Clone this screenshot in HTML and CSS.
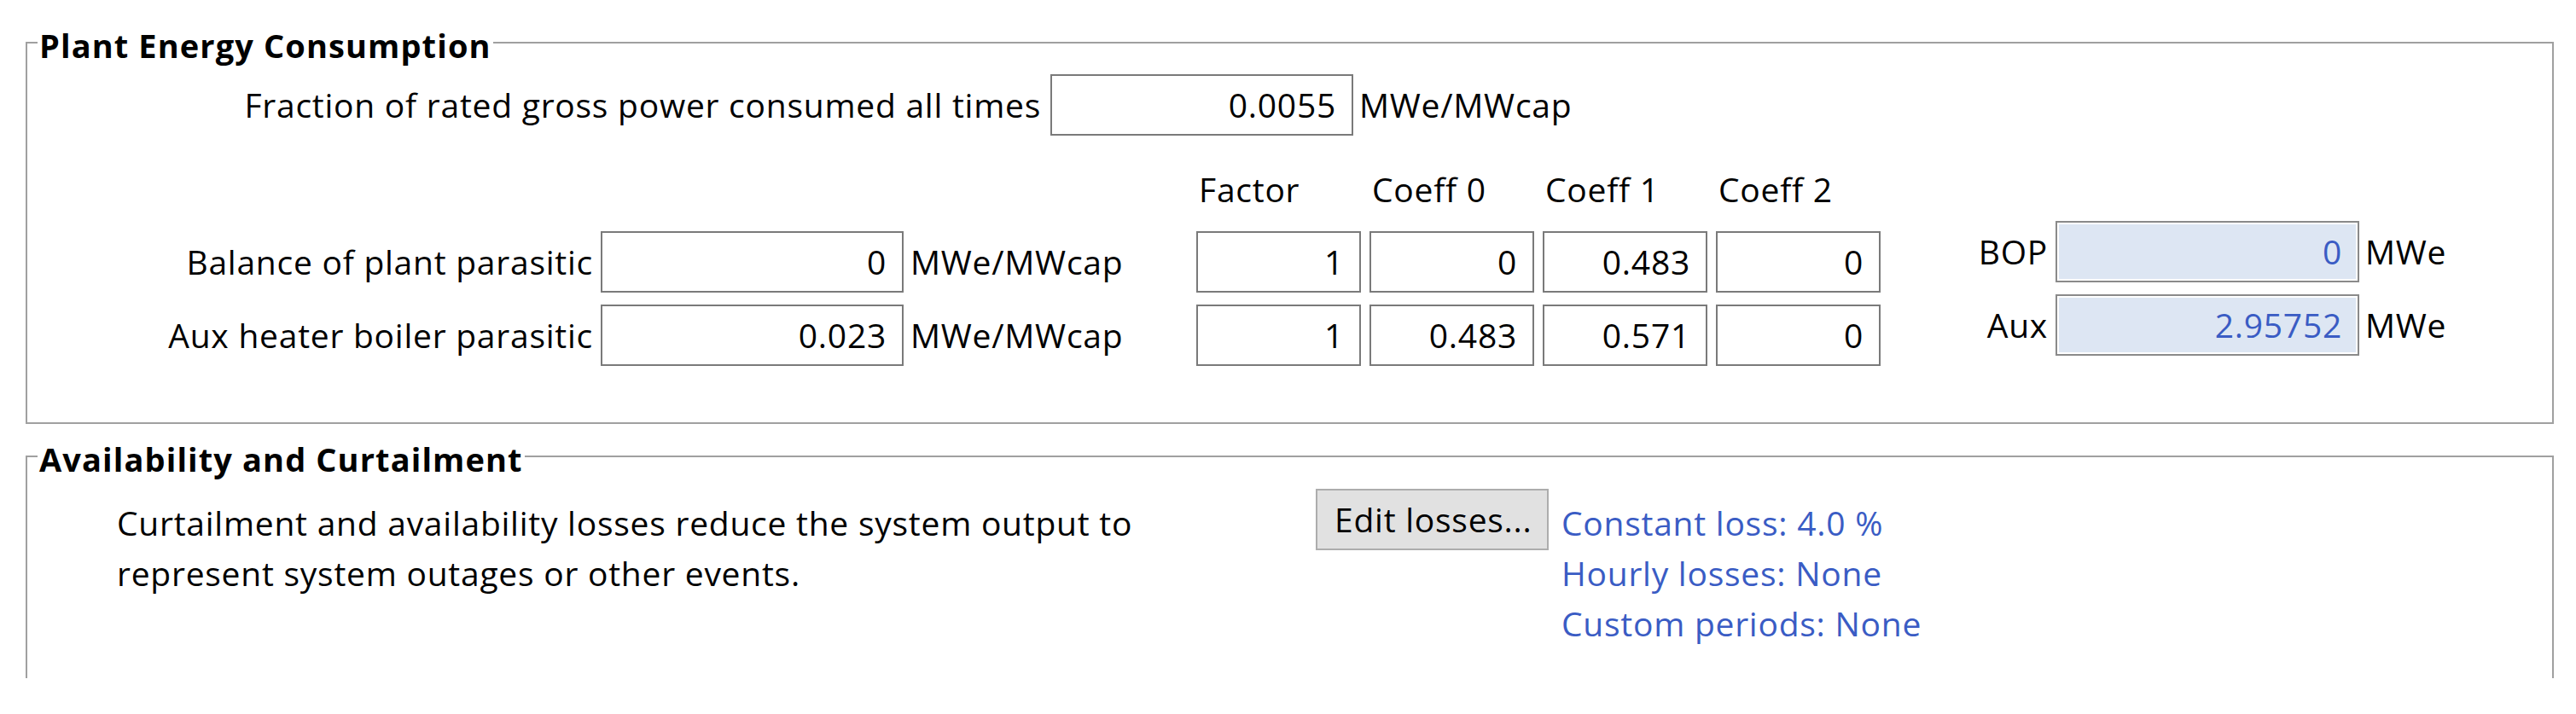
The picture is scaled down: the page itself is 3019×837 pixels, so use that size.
FILE: index.html
```html
<!DOCTYPE html>
<html lang="en">
<head>
<meta charset="utf-8">
<title>Plant Energy Consumption</title>
<link rel="stylesheet" href="styles.css">
</head>
<body>
<div class="page">
  <section class="group group-energy">
    <div class="group-title">Plant Energy Consumption</div>
    <div class="row1">
      <div class="row1-label">Fraction of rated gross power consumed all times</div>
      <div class="field main">0.0055</div>
      <div class="unit">MWe/MWcap</div>
    </div>
    <div class="lower">
      <div class="table">
        <div class="header-row">
          <div class="hcell">Factor</div>
          <div class="hcell">Coeff 0</div>
          <div class="hcell">Coeff 1</div>
          <div class="hcell">Coeff 2</div>
        </div>
        <div class="prows">
          <div class="prow">
            <div class="plabel">Balance of plant parasitic</div>
            <div class="field wide">0</div>
            <div class="unit-cell">MWe/MWcap</div>
            <div class="field coef">1</div>
            <div class="field coef">0</div>
            <div class="field coef">0.483</div>
            <div class="field coef">0</div>
          </div>
          <div class="prow">
            <div class="plabel">Aux heater boiler parasitic</div>
            <div class="field wide">0.023</div>
            <div class="unit-cell">MWe/MWcap</div>
            <div class="field coef">1</div>
            <div class="field coef">0.483</div>
            <div class="field coef">0.571</div>
            <div class="field coef">0</div>
          </div>
        </div>
      </div>
      <div class="results">
        <div class="rrow">
          <div class="rlabel">BOP</div>
          <div class="field ro">0</div>
          <div class="unit">MWe</div>
        </div>
        <div class="rrow">
          <div class="rlabel">Aux</div>
          <div class="field ro">2.95752</div>
          <div class="unit">MWe</div>
        </div>
      </div>
    </div>
  </section>

  <section class="group group-avail">
    <div class="group-title">Availability and Curtailment</div>
    <div class="avail-row">
      <div class="desc">Curtailment and availability losses reduce the system output to<br>represent system outages or other events.</div>
      <div class="btn">Edit losses...</div>
      <div class="losses">
        <div>Constant loss: 4.0 %</div>
        <div>Hourly losses: None</div>
        <div>Custom periods: None</div>
      </div>
    </div>
  </section>
</div>
</body>
</html>
```

FILE: styles.css
```css
html, body {
  margin: 0;
  padding: 0;
  background: #ffffff;
}

body {
  font-family: "Open Sans", "Noto Sans", sans-serif;
  font-size: 39px;
  letter-spacing: 0.75px;
  color: #000000;
  white-space: nowrap;
}

.page {
  padding-top: 49px;
  padding-left: 30px;
  width: 2963px;
}

.group {
  position: relative;
  box-sizing: border-box;
  width: 2963px;
  border: 2px solid #a0a0a0;
}

.group-energy {
  height: 448px;
}

.group-avail {
  margin-top: 37px;
  height: 261px;
  border-bottom: none;
}

.group-title {
  position: absolute;
  left: 12px;
  top: -16px;
  padding: 0 2px;
  background: #ffffff;
  font-size: 38px;
  letter-spacing: 1.1px;
  line-height: 36px;
  font-weight: 700;
}

.row1 {
  display: flex;
  align-items: center;
  margin-top: 36px;
  height: 72px;
  line-height: 72px;
}

.row1-label {
  width: 1188px;
  text-align: right;
}

.field {
  box-sizing: border-box;
  height: 72px;
  border: 2px solid #7a7a7a;
  background: #ffffff;
  text-align: right;
  padding-right: 18px;
  line-height: 68px;
}

.field.main {
  margin-left: 11px;
  width: 355px;
}

.unit {
  margin-left: 7px;
}

.lower {
  display: flex;
  align-items: flex-start;
}

.header-row {
  display: flex;
  margin-top: 37px;
  margin-bottom: 23px;
  height: 52px;
  line-height: 52px;
  padding-left: 1370px;
}

.hcell {
  box-sizing: border-box;
  width: 193px;
  padding-left: 3px;
}

.hcell + .hcell {
  margin-left: 10px;
}

.prows {
  display: flex;
  flex-direction: column;
  gap: 14px;
}

.prow {
  display: flex;
  height: 72px;
  line-height: 72px;
}

.plabel {
  width: 663px;
  text-align: right;
}

.field.wide {
  margin-left: 9px;
  width: 355px;
}

.unit-cell {
  margin-left: 8px;
  width: 335px;
}

.field.coef {
  width: 193px;
}

.field.coef + .field.coef {
  margin-left: 10px;
}

.results {
  display: flex;
  flex-direction: column;
  gap: 14px;
  margin-top: 100px;
}

.rrow {
  display: flex;
  height: 72px;
  line-height: 72px;
}

.rlabel {
  width: 196px;
  text-align: right;
}

.field.ro {
  margin-left: 9px;
  width: 356px;
  border-color: #8a8a8a;
  background: #dde6f3;
  box-shadow: inset 0 0 0 2px #ffffff;
  color: #3a5cc4;
  line-height: 68px;
}

.avail-row {
  display: flex;
  align-items: flex-start;
  padding-top: 37px;
}

.desc {
  box-sizing: border-box;
  margin-left: 105px;
  margin-top: 10px;
  width: 1405px;
  line-height: 59px;
}

.btn {
  box-sizing: border-box;
  width: 273px;
  height: 72px;
  border: 2px solid #adadad;
  background: #e1e1e1;
  padding-left: 20px;
  line-height: 68px;
}

.losses {
  margin-left: 15px;
  margin-top: 10px;
  line-height: 59px;
  color: #3a5cc4;
}
```
